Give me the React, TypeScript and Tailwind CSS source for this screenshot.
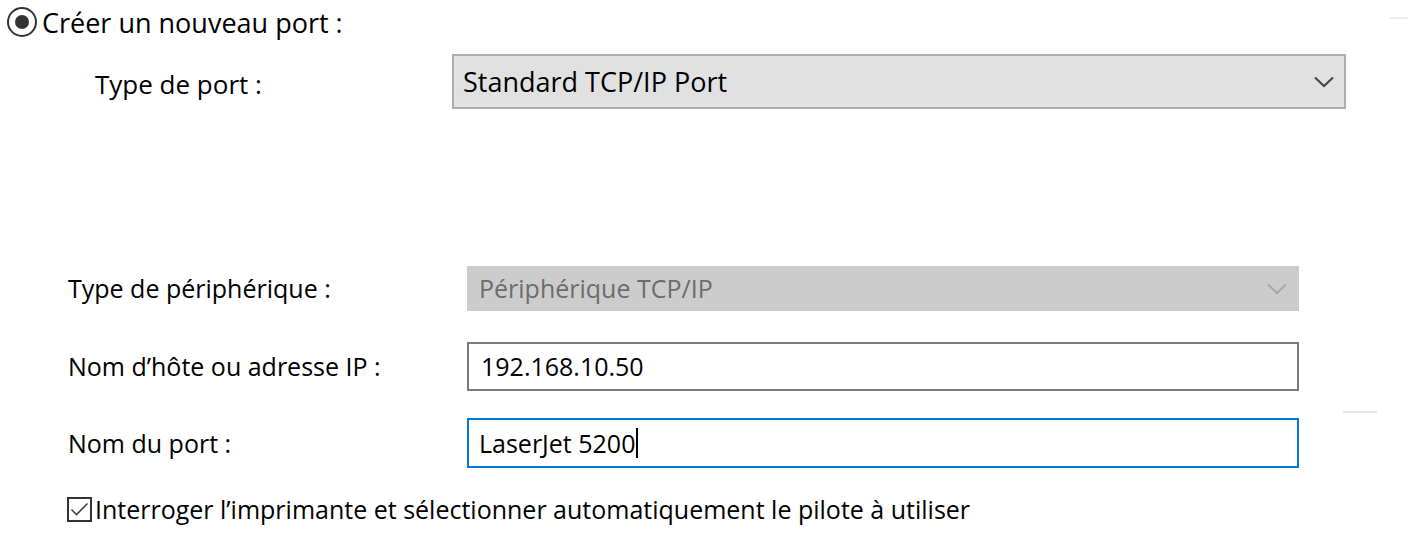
import React from "react";

const Chevron = ({ color }: { color: string }) => (
  <svg width="20" height="12" viewBox="0 0 20 12" fill="none">
    <path d="M1 1.5 L10 10 L19 1.5" stroke={color} strokeWidth="2" />
  </svg>
);

export default function App() {
  return (
    <div
      className="relative h-[542px] w-[1408px] overflow-hidden bg-white text-[25px] text-black"
      style={{ fontFamily: '"Open Sans", "Noto Sans", sans-serif' }}
    >
      {/* Radio row */}
      <div className="box-content flex h-[30px] items-center pl-[7px] pt-[7px]">
        <div className="flex h-[30px] w-[30px] items-center justify-center rounded-full border-2 border-[#333333]">
          <div className="h-[14px] w-[14px] rounded-full bg-[#333333]" />
        </div>
        <span className="ml-[5px] text-[27px] leading-none">Créer un nouveau port :</span>
      </div>

      {/* Type de port row */}
      <div className="mt-[17px] flex items-center">
        <div className="w-[452px] pl-[95px] pt-[4px] text-[26px] leading-none">Type de port :</div>
        <div className="flex h-[55px] w-[894px] items-center justify-between border-2 border-[#adadad] bg-[#e1e1e1] pl-[9px] pr-[10px]">
          <span className="text-[27px] leading-none">Standard TCP/IP Port</span>
          <Chevron color="#444444" />
        </div>
      </div>

      {/* Device section */}
      <div className="mt-[157px] flex flex-col">
        <div className="flex items-center">
          <div className="w-[467px] pl-[68px] leading-none">Type de périphérique :</div>
          <div className="flex h-[45px] w-[832px] items-center justify-between border-2 border-[#cccccc] bg-[#cccccc] pl-[10px] pr-[10px]">
            <span className="leading-none text-[#6d6d6d]">Périphérique TCP/IP</span>
            <Chevron color="#a8a8a8" />
          </div>
        </div>

        <div className="mt-[31px] flex items-center">
          <div className="w-[467px] pl-[68px] leading-none">Nom d’hôte ou adresse IP :</div>
          <div className="flex h-[49px] w-[832px] items-center border-2 border-[#7a7a7a] bg-white pl-[12px]">
            <span className="leading-none">192.168.10.50</span>
          </div>
        </div>

        <div className="mt-[27px] flex items-center">
          <div className="w-[467px] pl-[68px] leading-none">Nom du port :</div>
          <div className="flex h-[50px] w-[832px] items-center border-2 border-[#0078d7] bg-white pl-[10px]">
            <span className="leading-none">LaserJet 5200</span>
            <span className="ml-[1px] h-[30px] w-[2px] bg-black" />
          </div>
        </div>

        <div className="mt-[29px] flex items-center pl-[67px]">
          <div className="flex h-[25px] w-[25px] items-center justify-center border-2 border-[#333333] bg-white">
            <svg width="19" height="15" viewBox="0 0 19 15" fill="none">
              <path d="M1.5 7.5 L6.5 12.5 L17.5 1.5" stroke="#444444" strokeWidth="1.6" />
            </svg>
          </div>
          <span className="ml-[3px] leading-none">
            Interroger l’imprimante et sélectionner automatiquement le pilote à utiliser
          </span>
        </div>
      </div>

      {/* faint background artifacts */}
      <div className="absolute left-[1343px] top-[411px] h-[2px] w-[34px] bg-[#e4e4e4]" />
      <div className="absolute left-[1390px] top-[17px] h-[2px] w-[18px] bg-[#ececec]" />
    </div>
  );
}
